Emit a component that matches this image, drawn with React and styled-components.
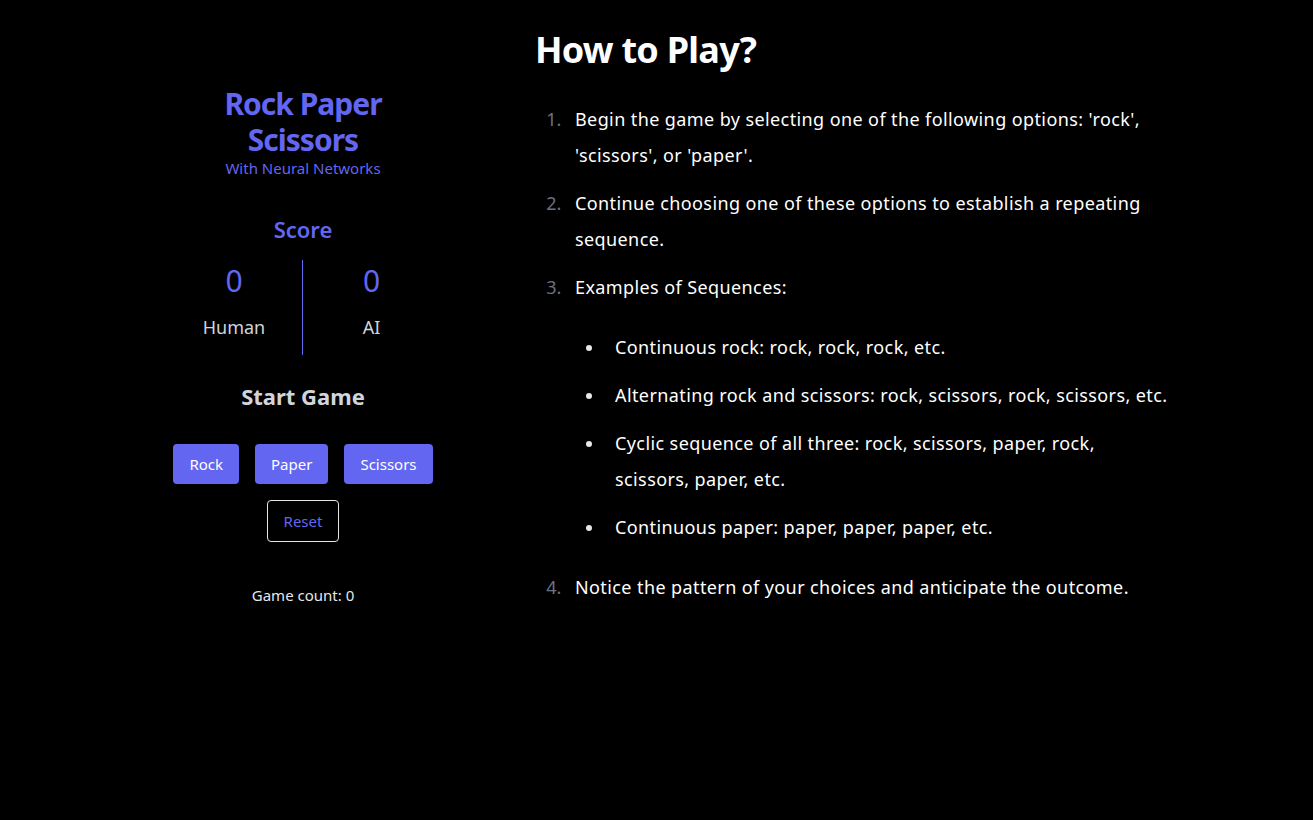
import React from 'react';
import styled, { createGlobalStyle } from 'styled-components';

const GlobalStyle = createGlobalStyle`
  html, body {
    margin: 0;
    padding: 0;
    background-color: #000;
  }

  body {
    font-family: 'Noto Sans', 'Open Sans', sans-serif;
    color: #fff;
  }

  * {
    box-sizing: border-box;
  }
`;

const Page = styled.div`
  display: flex;
  justify-content: center;
  min-height: 820px;
  background-color: #000;
`;

const GamePanel = styled.section`
  display: flex;
  flex-direction: column;
  align-items: center;
  width: 320px;
  padding-top: 86px;
  text-align: center;
`;

const Title = styled.h1`
  margin: 0;
  font-size: 30px;
  line-height: 36px;
  font-weight: 700;
  letter-spacing: -1px;
  color: #6366f1;
`;

const Subtitle = styled.p`
  margin: 0;
  font-size: 15px;
  line-height: 20px;
  color: #6366f1;
`;

const ScoreTitle = styled.h2`
  margin: 35px 0 0;
  font-size: 22px;
  line-height: 32px;
  font-weight: 600;
  color: #6366f1;
`;

const ScoreBoard = styled.div`
  display: grid;
  grid-template-columns: 136px 1px 137px;
  margin-top: 15px;
`;

const ScoreColumn = styled.div`
  display: flex;
  flex-direction: column;
  align-items: center;
  padding-top: 3px;
`;

const Divider = styled.div`
  width: 1px;
  height: 95px;
  background-color: #6366f1;
`;

const ScoreValue = styled.span`
  font-size: 30px;
  line-height: 36px;
  color: #6366f1;
`;

const ScoreLabel = styled.span`
  margin-top: 14px;
  font-size: 18px;
  line-height: 28px;
  color: #d1d5db;
`;

const StartTitle = styled.h2`
  margin: 25px 0 0;
  font-size: 22px;
  line-height: 32px;
  font-weight: 700;
  color: #d1d5db;
`;

const ChoiceRow = styled.div`
  display: flex;
  gap: 16px;
  margin-top: 32px;
`;

const ChoiceButton = styled.button`
  height: 40px;
  padding: 0 16px;
  border: none;
  border-radius: 4px;
  background-color: #6366f1;
  color: #fff;
  font-family: inherit;
  font-size: 15px;
  cursor: pointer;
`;

const ResetButton = styled.button`
  height: 42px;
  margin-top: 16px;
  padding: 0 16px;
  border: 1px solid #e5e7eb;
  border-radius: 4px;
  background-color: transparent;
  color: #6366f1;
  font-family: inherit;
  font-size: 15px;
  cursor: pointer;
`;

const GameCount = styled.p`
  margin: 43px 0 0;
  font-size: 15px;
  line-height: 20px;
  color: #e5e7eb;
`;

const Rules = styled.section`
  width: 635px;
  margin-left: 72px;
`;

const RulesTitle = styled.h1`
  margin: 30px 0 0;
  font-size: 36px;
  line-height: 40px;
  font-weight: 700;
  letter-spacing: -0.75px;
  color: #fff;
`;

const Steps = styled.ol`
  display: flex;
  flex-direction: column;
  gap: 12px;
  margin: 31px 0 0;
  padding-left: 31px;
  font-size: 18px;
  line-height: 36px;
  letter-spacing: 0.4px;

  & > li::marker {
    color: #6b7280;
    letter-spacing: 0;
  }
`;

const Step = styled.li`
  padding-left: 9px;
`;

const Examples = styled.ul`
  display: flex;
  flex-direction: column;
  gap: 12px;
  margin: 24px 0 12px;
  padding-left: 30px;
  list-style: disc;
`;

const Example = styled.li`
  padding-left: 10px;

  &::marker {
    color: #e5e7eb;
  }
`;

const steps = [
  "Begin the game by selecting one of the following options: 'rock', 'scissors', or 'paper'.",
  'Continue choosing one of these options to establish a repeating sequence.',
];

const examples = [
  'Continuous rock: rock, rock, rock, etc.',
  'Alternating rock and scissors: rock, scissors, rock, scissors, etc.',
  'Cyclic sequence of all three: rock, scissors, paper, rock, scissors, paper, etc.',
  'Continuous paper: paper, paper, paper, etc.',
];

function App() {
  return (
    <>
      <GlobalStyle />
      <Page>
        <GamePanel>
          <Title>
            Rock Paper
            <br />
            Scissors
          </Title>
          <Subtitle>With Neural Networks</Subtitle>

          <ScoreTitle>Score</ScoreTitle>
          <ScoreBoard>
            <ScoreColumn>
              <ScoreValue>0</ScoreValue>
              <ScoreLabel>Human</ScoreLabel>
            </ScoreColumn>
            <Divider />
            <ScoreColumn>
              <ScoreValue>0</ScoreValue>
              <ScoreLabel>AI</ScoreLabel>
            </ScoreColumn>
          </ScoreBoard>

          <StartTitle>Start Game</StartTitle>
          <ChoiceRow>
            <ChoiceButton>Rock</ChoiceButton>
            <ChoiceButton>Paper</ChoiceButton>
            <ChoiceButton>Scissors</ChoiceButton>
          </ChoiceRow>
          <ResetButton>Reset</ResetButton>

          <GameCount>Game count: 0</GameCount>
        </GamePanel>

        <Rules>
          <RulesTitle>How to Play?</RulesTitle>
          <Steps>
            {steps.map((step) => (
              <Step key={step}>{step}</Step>
            ))}
            <Step>
              Examples of Sequences:
              <Examples>
                {examples.map((example) => (
                  <Example key={example}>{example}</Example>
                ))}
              </Examples>
            </Step>
            <Step>Notice the pattern of your choices and anticipate the outcome.</Step>
          </Steps>
        </Rules>
      </Page>
    </>
  );
}

export default App;
